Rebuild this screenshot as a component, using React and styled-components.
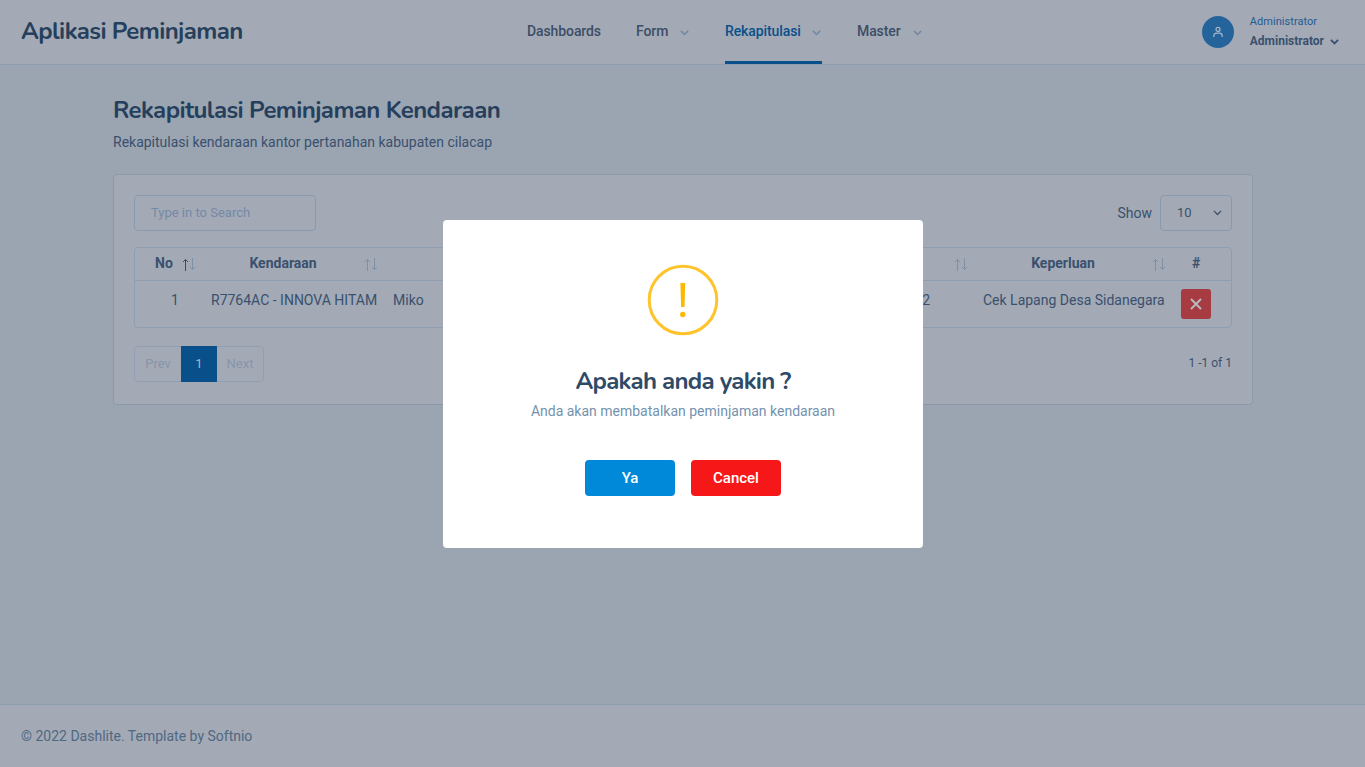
import React from "react";
import styled, { createGlobalStyle } from "styled-components";

const c = {
  surface: "#a3aab5",
  page: "#9ba5b1",
  line: "#8f9db1",
  cardLine: "#8b99ad",
  heading: "#253f5c",
  text: "#3a506e",
  nav: "#3c4e67",
  primary: "#09508b",
  muted: "#8695ab",
};

const Global = createGlobalStyle`
  *, *::before, *::after { box-sizing: border-box; }
  body { margin: 0; background: ${c.page}; color: ${c.text}; font: 400 14px/23px Roboto, sans-serif; }
  h1, h2, p { margin: 0; }
  button, input { font-family: inherit; }
`;

const Page = styled.div`
  display: flex;
  flex-direction: column;
  height: 100vh;
  min-height: 767px;
`;
const Header = styled.header`
  display: grid;
  grid-template-columns: 506px 1fr auto;
  height: 65px;
  padding: 0 26px 0 21px;
  background: ${c.surface};
  border-bottom: 1px solid ${c.line};
`;
const Title = styled.h1`
  font: 700 24px/32px Nunito, Lato, sans-serif;
  letter-spacing: ${(p) => p.$spacing || -0.6}px;
  color: ${(p) => p.$color || c.heading};
  white-space: nowrap;
`;
const Brand = styled(Title)`
  align-self: center;
  padding-bottom: 2px;
`;
const Nav = styled.nav`
  display: flex;
  gap: 35px;
`;
const NavItem = styled.a`
  display: flex;
  align-items: center;
  justify-content: space-between;
  width: ${(p) => p.$width}px;
  height: 64px;
  padding: ${(p) => (p.$active ? "2px 1px 0 0" : "0 1px 1px 0")};
  border-bottom: ${(p) => (p.$active ? `3px solid ${c.primary}` : "0")};
  border-radius: 2px 2px 0 0;
  color: ${(p) => (p.$active ? c.primary : c.nav)};
  font-weight: 500;
  letter-spacing: -0.1px;
  white-space: nowrap;
  & svg { margin-top: 1px; }
`;
const User = styled.div`
  display: flex;
  align-items: center;
  gap: 16px;
`;
const Avatar = styled.div`
  display: grid;
  place-items: center;
  width: 32px;
  height: 32px;
  border-radius: 50%;
  background: #25649b;
  color: #a9b8ca;
`;
const UserText = styled.div`
  display: flex;
  flex-direction: column;
  gap: 7px;
  padding-bottom: 2px;
`;
const Role = styled.span`
  font-size: 11px;
  line-height: 12px;
  font-weight: 450;
  letter-spacing: 0.05px;
  color: #245b92;
`;
const UserName = styled.span`
  display: flex;
  align-items: center;
  gap: 6px;
  font-size: 12px;
  line-height: 12px;
  font-weight: 700;
  & svg { margin-top: 2px; }
`;
const Main = styled.main`
  flex: 1;
  width: 1140px;
  margin: 0 auto;
  padding-top: 29px;
  position: relative;
  left: 0.5px;
`;
const Lead = styled.p`
  margin-top: 5px;
`;
const Card = styled.section`
  height: 231px;
  margin-top: 20px;
  padding: 20px;
  border: 1px solid ${c.cardLine};
  border-radius: 4px;
  background: ${c.surface};
`;
const Bar = styled.div`
  display: flex;
  align-items: center;
  justify-content: space-between;
  height: 36px;
`;
const Search = styled.input`
  width: 182px;
  height: 36px;
  padding: 0 16px 1px;
  border: 1px solid ${c.cardLine};
  border-radius: 4px;
  background: transparent;
  font-size: 13px;
  outline: 0;
  &::placeholder { color: #7488a7; opacity: 1; }
`;
const Show = styled.label`
  display: flex;
  align-items: center;
  gap: 8px;
`;
const Select = styled.span`
  display: flex;
  align-items: center;
  justify-content: space-between;
  width: 72px;
  height: 36px;
  padding: 0 9px 2px 16px;
  border: 1px solid ${c.cardLine};
  border-radius: 4px;
  font-size: 13px;
`;
const TableFrame = styled.div`
  margin: 16px 0 18px;
  border: 1px solid ${c.line};
  border-radius: 4px;
`;
const Row = styled.div`
  display: grid;
  grid-template-columns: 68px 182px 480px 110px 198px 58px;
  height: ${(p) => (p.$head ? 33 : 46)}px;
  border-bottom: ${(p) => (p.$head ? `1px solid ${c.line}` : "0")};
  font-weight: ${(p) => (p.$head ? 700 : 400)};
`;
const Cell = styled.div`
  display: flex;
  align-items: flex-start;
  justify-content: ${(p) => p.$justify || "space-between"};
  padding: ${(p) => p.$pad || "4px 8px"};
  white-space: nowrap;
`;
const HeadLabel = styled.span`
  flex: 1;
  padding-right: 9px;
  text-align: center;
`;
const SortIcon = styled.svg`
  flex: none;
  margin: 6px -1px 0 0;
`;
const Remove = styled.button`
  display: grid;
  place-items: center;
  width: 30px;
  height: 30px;
  padding: 0;
  border: 0;
  border-radius: 3px;
  background: #a63c42;
  color: #b9bcc5;
`;
const Pager = styled.div`
  display: flex;
  width: 130px;
  height: 36px;
  border: 1px solid #929fb2;
  border-radius: 4px;
`;
const PageItem = styled.span`
  width: ${(p) => p.$width}px;
  height: ${(p) => (p.$active ? 36 : 34)}px;
  margin-top: ${(p) => (p.$active ? -1 : 0)}px;
  background: ${(p) => (p.$active ? c.primary : "transparent")};
  color: ${(p) => (p.$active ? "#a9b6c6" : c.muted)};
  font-size: 13px;
  line-height: ${(p) => (p.$active ? 35 : 33)}px;
  font-weight: 450;
  text-align: center;
`;
const Count = styled.span`
  font-size: 12px;
  padding-bottom: 2px;
`;
const Footer = styled.footer`
  display: flex;
  align-items: center;
  height: 63px;
  padding-left: 21px;
  border-top: 1px solid #8c9cad;
  background: ${c.surface};
  color: #4f6883;
`;
const Overlay = styled.div`
  position: fixed;
  inset: 0;
  display: grid;
  place-items: center;
  padding: 1px 0 0 1px;
`;
const Dialog = styled.div`
  display: flex;
  flex-direction: column;
  align-items: center;
  width: 480px;
  height: 328px;
  padding-top: 44px;
  border-radius: 4px;
  background: #fff;
`;
const DialogTitle = styled(Title)`
  margin-top: 29px;
`;
const DialogText = styled.p`
  margin-top: 3px;
  line-height: 23px;
  color: #7492ae;
`;
const Actions = styled.div`
  display: flex;
  gap: 16px;
  margin-top: 37px;
`;
const Action = styled.button`
  width: 90px;
  height: 36px;
  padding: 0;
  border: 0;
  border-radius: 4px;
  background: ${(p) => (p.$danger ? "#f61819" : "#0088d9")};
  color: #fff;
  font-size: 15px;
  font-weight: 500;
`;

const Chevron = ({ size = 9, width = 1.6, color = "#7186a0" }) => (
  <svg width={size} height={size} viewBox="0 0 10 10" fill="none" stroke={color} strokeWidth={width}>
    <path d="M1 3.2 5 7.2 9 3.2" />
  </svg>
);

const Sort = ({ asc }) => (
  <SortIcon width="14" height="13" viewBox="0 0 14 13" fill="none" strokeWidth="1">
    <path d="M3.5 13V1.5M1 4 3.5 1.5 6 4" stroke={asc ? "#3a4d61" : "#7f90a5"} />
    <path d="M10.5 0V11.5M8 9 10.5 11.5 13 9" stroke="#7f90a5" />
  </SortIcon>
);

export default function App() {
  return (
    <>
      <Global />
      <Page>
        <Header>
          <Brand>Aplikasi Peminjaman</Brand>
          <Nav>
            <NavItem $width={74}>Dashboards</NavItem>
            <NavItem $width={54}>Form <Chevron /></NavItem>
            <NavItem $width={97} $active>Rekapitulasi <Chevron /></NavItem>
            <NavItem $width={66}>Master <Chevron /></NavItem>
          </Nav>
          <User>
            <Avatar>
              <svg width="12" height="12" viewBox="0 0 12 12" fill="none" stroke="currentColor" strokeWidth="1.2">
                <circle cx="6" cy="3.4" r="2" />
                <path d="M1.8 11V10Q1.8 7.2 4.7 7.2H7.3Q10.2 7.2 10.2 10V11" />
              </svg>
            </Avatar>
            <UserText>
              <Role>Administrator</Role>
              <UserName>Administrator <Chevron width={2.1} color={c.text} /></UserName>
            </UserText>
          </User>
        </Header>
        <Main>
          <Title as="h2">Rekapitulasi Peminjaman Kendaraan</Title>
          <Lead>Rekapitulasi kendaraan kantor pertanahan kabupaten cilacap</Lead>
          <Card>
            <Bar>
              <Search placeholder="Type in to Search" />
              <Show>Show <Select>10 <Chevron width={1.5} color={c.text} /></Select></Show>
            </Bar>
            <TableFrame>
              <Row $head>
                <Cell $pad="4px 8px 4px 20px">No <Sort asc /></Cell>
                <Cell><HeadLabel>Kendaraan</HeadLabel><Sort /></Cell>
                <Cell />
                <Cell $justify="flex-end"><Sort /></Cell>
                <Cell><HeadLabel>Keperluan</HeadLabel><Sort /></Cell>
                <Cell $justify="flex-start" $pad="4px 19px">#</Cell>
              </Row>
              <Row>
                <Cell $justify="center" $pad="8px 8px 8px 20px">1</Cell>
                <Cell $pad="8px">R7764AC - INNOVA HITAM</Cell>
                <Cell $pad="8px">Miko</Cell>
                <Cell $justify="flex-end" $pad="8px 45px">2</Cell>
                <Cell $pad="8px">Cek Lapang Desa Sidanegara</Cell>
                <Cell $pad="8px">
                  <Remove aria-label="Batalkan">
                    <svg width="12" height="12" viewBox="0 0 12 12" stroke="currentColor" strokeWidth="1.8">
                      <path d="M1 1 11 11M11 1 1 11" />
                    </svg>
                  </Remove>
                </Cell>
              </Row>
            </TableFrame>
            <Bar>
              <Pager>
                <PageItem $width={46}>Prev</PageItem>
                <PageItem $width={36} $active>1</PageItem>
                <PageItem $width={46}>Next</PageItem>
              </Pager>
              <Count>1 -1 of 1</Count>
            </Bar>
          </Card>
        </Main>
        <Footer>© 2022 Dashlite. Template by Softnio</Footer>
      </Page>
      <Overlay>
        <Dialog role="dialog">
          <svg width="72" height="72" viewBox="0 0 72 72">
            <circle cx="36" cy="36" r="33.8" fill="none" stroke="#ffc32b" strokeWidth="3" />
            <path d="M33.4 19H38.2L37.5 43H34.1Z" fill="#ffb800" />
            <circle cx="35.8" cy="50.5" r="2.7" fill="#ffb800" />
          </svg>
          <DialogTitle as="h2" $color="#2f4a66" $spacing={-0.73}>Apakah anda yakin ?</DialogTitle>
          <DialogText>Anda akan membatalkan peminjaman kendaraan</DialogText>
          <Actions>
            <Action>Ya</Action>
            <Action $danger>Cancel</Action>
          </Actions>
        </Dialog>
      </Overlay>
    </>
  );
}
